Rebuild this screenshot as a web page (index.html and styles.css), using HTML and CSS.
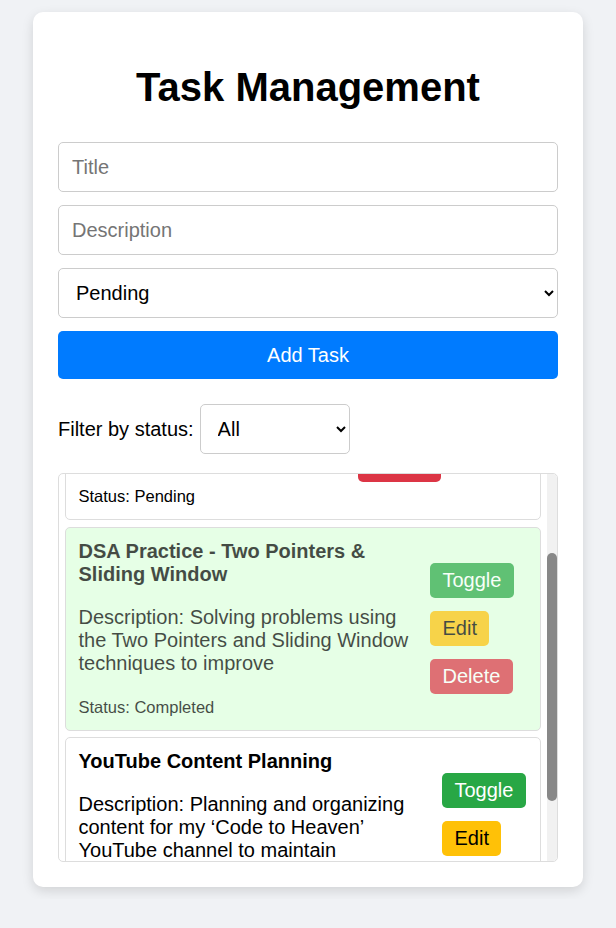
FILE: index.html
```html
<!DOCTYPE html>
<html lang="en">
<head>
<meta charset="utf-8">
<title>Task Management</title>
<link rel="stylesheet" href="styles.css">
</head>
<body>
<div class="app">
  <h1 class="app-title">Task Management</h1>
  <form class="task-form">
    <input class="field" type="text" placeholder="Title">
    <input class="field" type="text" placeholder="Description">
    <select class="field field-select">
      <option>Pending</option>
      <option>Completed</option>
    </select>
    <button type="button" class="add-btn">Add Task</button>
  </form>
  <div class="filter">
    <label class="filter-label" for="filter">Filter by status:</label>
    <select id="filter" class="filter-select">
      <option>All</option>
      <option>Pending</option>
      <option>Completed</option>
    </select>
  </div>
  <div class="task-list">
    <div class="task-scroll" id="taskScroll">
      <div class="task">
        <div class="task-info">
          <h3 class="task-title">Portfolio Website</h3>
          <p class="task-desc">Description: Finish the projects section and deploy it online</p>
          <p class="task-status">Status: Pending</p>
        </div>
        <div class="actions actions-wide">
          <button type="button" class="btn btn-toggle">Toggle</button>
          <button type="button" class="btn btn-edit">Edit</button>
          <button type="button" class="btn btn-delete">Delete</button>
        </div>
      </div>
      <div class="task completed">
        <div class="task-info">
          <h3 class="task-title">DSA Practice - Two Pointers &amp; Sliding Window</h3>
          <p class="task-desc">Description: Solving problems using the Two Pointers and Sliding Window techniques to improve</p>
          <p class="task-status">Status: Completed</p>
        </div>
        <div class="actions actions-mid">
          <button type="button" class="btn btn-toggle">Toggle</button>
          <button type="button" class="btn btn-edit">Edit</button>
          <button type="button" class="btn btn-delete">Delete</button>
        </div>
      </div>
      <div class="task">
        <div class="task-info">
          <h3 class="task-title">YouTube Content Planning</h3>
          <p class="task-desc">Description: Planning and organizing content for my ‘Code to Heaven’ YouTube channel to maintain consistency.</p>
          <p class="task-status">Status: Pending</p>
        </div>
        <div class="actions actions-narrow">
          <button type="button" class="btn btn-toggle">Toggle</button>
          <button type="button" class="btn btn-edit">Edit</button>
          <button type="button" class="btn btn-delete">Delete</button>
        </div>
      </div>
    </div>
    <div class="scrollbar" aria-hidden="true">
      <div class="scrollbar-thumb"></div>
    </div>
  </div>
</div>
<script src="script.js"></script>
</body>
</html>
```

FILE: styles.css
```css
* {
  box-sizing: border-box;
}

body {
  margin: 0;
  padding: 12px 0;
  background: #f0f2f5;
  font-family: "Liberation Sans", Arial, sans-serif;
  color: #000;
}

.app {
  width: 550px;
  margin: 0 auto;
  padding: 25px;
  background: #fff;
  border-radius: 10px;
  box-shadow: 0 4px 12px rgba(0, 0, 0, 0.13);
}

.app-title {
  margin: 27px 0 32px;
  font-size: 40px;
  line-height: 46px;
  font-weight: bold;
  text-align: center;
}

.task-form {
  display: flex;
  flex-direction: column;
  gap: 13px;
}

.field {
  width: 100%;
  height: 50px;
  padding: 0 13px;
  border: 1px solid #ccc;
  border-radius: 5px;
  background: #fff;
  color: #000;
  font-family: "Liberation Sans", Arial, sans-serif;
  font-size: 20px;
}

.field::placeholder {
  color: #757575;
}

.add-btn {
  height: 48px;
  border: none;
  border-radius: 5px;
  background: #007bff;
  color: #fff;
  font-family: "Liberation Sans", Arial, sans-serif;
  font-size: 20px;
}

.filter {
  display: flex;
  align-items: center;
  gap: 6px;
  margin-top: 25px;
  font-size: 20px;
  line-height: 23px;
}

.filter-select {
  width: 150px;
  height: 50px;
  padding: 0 13px;
  border: 1px solid #ccc;
  border-radius: 5px;
  background: #fff;
  color: #000;
  font-family: "Liberation Sans", Arial, sans-serif;
  font-size: 20px;
}

.task-list {
  display: flex;
  margin-top: 19px;
  height: 389px;
  overflow: hidden;
  border: 1px solid #ddd;
  border-radius: 5px;
  background: #fff;
}

.task-scroll {
  flex: 1;
  min-width: 0;
  padding: 6px;
  overflow-y: auto;
  scrollbar-width: none;
}

.task-scroll::-webkit-scrollbar {
  display: none;
}

.scrollbar {
  flex: none;
  width: 10px;
  background: #f1f1f1;
  border-radius: 0 4px 4px 0;
}

.scrollbar-thumb {
  height: 248px;
  margin-top: 79px;
  background: #888;
  border-radius: 5px;
}

.task {
  display: flex;
  align-items: center;
  gap: 6px;
  margin-bottom: 6.5px;
  padding: 12px 12.5px 13px;
  border: 1px solid #ddd;
  border-radius: 5px;
  background: #fff;
}

.task:last-child {
  margin-bottom: 0;
}

.task.completed {
  background: #e6ffe6;
}

.task.completed > * {
  opacity: 0.7;
}

.task-info {
  flex: 1;
  min-width: 0;
}

.task-title {
  margin: 0;
  font-size: 20px;
  line-height: 23px;
  font-weight: bold;
}

.task-desc {
  margin: 20px 0 23px;
  font-size: 20px;
  line-height: 23px;
}

.task-status {
  margin: 0;
  font-size: 16.5px;
  line-height: 19px;
}

.actions {
  flex: none;
  display: flex;
  flex-wrap: wrap;
  align-items: flex-start;
  column-gap: 12.5px;
  row-gap: 13px;
}

.actions-wide {
  width: 169.5px;
}

.actions-mid {
  width: 97.5px;
}

.actions-narrow {
  width: 85.5px;
}

.btn {
  padding: 6px 12.5px;
  border: none;
  border-radius: 5px;
  font-family: "Liberation Sans", Arial, sans-serif;
  font-size: 20px;
  line-height: 23px;
}

.btn-toggle {
  background: #28a745;
  color: #fff;
}

.btn-edit {
  background: #ffc107;
  color: #000;
}

.btn-delete {
  background: #dc3545;
  color: #fff;
}
```

FILE: script.js
```js
var scroller = document.getElementById('taskScroll');
var cards = scroller.querySelectorAll('.task');
scroller.scrollTop = Math.round(cards[1].getBoundingClientRect().top - 527);
```
